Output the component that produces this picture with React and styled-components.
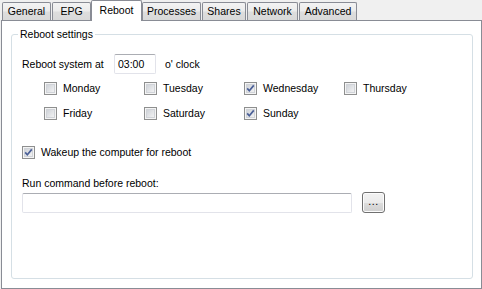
import React from "react";
import styled, { createGlobalStyle } from "styled-components";

const GlobalStyle = createGlobalStyle`
    html, body {
        margin: 0;
        padding: 0;
        background: #f0f0f0;
    }
    body {
        font-family: "Liberation Sans", Arial, sans-serif;
        font-size: 10.5px;
        color: #000;
    }
`;

const Window = styled.div`
    width: 482px;
    height: 289px;
    background: #f0f0f0;
    overflow: hidden;
`;

const TabStrip = styled.div`
    display: flex;
    align-items: flex-end;
    height: 20px;
    padding-left: 2px;
`;

const Tab = styled.div`
    box-sizing: border-box;
    width: ${props => props.$w}px;
    margin-right: ${props => props.$gap}px;
    height: ${props => (props.$active ? 21 : 18)}px;
    margin-bottom: ${props => (props.$active ? -1 : 0)}px;
    border: 1px solid #898c95;
    border-bottom: ${props => (props.$active ? "none" : "0")};
    border-radius: 2px 2px 0 0;
    background: ${props =>
        props.$active
            ? "#fff"
            : "linear-gradient(#f3f3f3 0%, #ececec 45%, #dddddd 55%, #d9d9d9 100%)"};
    position: relative;
    z-index: ${props => (props.$active ? 2 : 1)};
    display: flex;
    justify-content: center;
    padding-top: ${props => (props.$active ? 3 : 2)}px;
    line-height: 13px;
    white-space: nowrap;
`;

const Panel = styled.div`
    box-sizing: border-box;
    margin-left: 1px;
    width: 481px;
    height: 269px;
    border: 1px solid #898c95;
    background: #fff;
    position: relative;
    z-index: 1;
    padding-top: 7px;
`;

const GroupBox = styled.fieldset`
    box-sizing: border-box;
    margin: 0 0 0 9px;
    width: 462px;
    height: 251px;
    padding: 0;
    border: 1px solid #d5dfe5;
    border-radius: 3px;
`;

const Legend = styled.legend`
    margin-left: 6px;
    padding: 0 2px;
    line-height: 13px;
`;

const Body = styled.div`
    padding: 13px 0 0 10px;
    display: flex;
    flex-direction: column;
`;

const TimeRow = styled.div`
    display: flex;
    align-items: center;
    height: 20px;
`;

const RowLabel = styled.span`
    width: 92px;
`;

const TextBox = styled.div`
    box-sizing: border-box;
    width: ${props => props.$w}px;
    height: 20px;
    border: 1px solid #e2e3ea;
    border-top-color: #abadb3;
    border-radius: 2px;
    background: #fff;
    padding: 2px 0 0 3px;
    line-height: 14px;
`;

const Suffix = styled.span`
    margin-left: 9px;
`;

const DayGrid = styled.div`
    display: grid;
    grid-template-columns: repeat(4, 100px);
    grid-auto-rows: 25px;
    margin: 8px 0 0 22px;
`;

const CheckRow = styled.label`
    display: flex;
    align-items: center;
    height: 13px;
    gap: 6px;
    line-height: 13px;
`;

const WakeRow = styled(CheckRow)`
    margin-top: 14px;
`;

const CommandLabel = styled.div`
    margin-top: 18px;
    line-height: 13px;
`;

const CommandRow = styled.div`
    display: flex;
    align-items: flex-start;
    margin-top: 3px;
`;

const BrowseButton = styled.div`
    box-sizing: border-box;
    width: 23px;
    height: 21px;
    margin: -1px 0 0 10px;
    border: 1px solid #707070;
    border-radius: 3px;
    background: linear-gradient(#f2f2f2 0%, #ebebeb 50%, #dddddd 51%, #cfcfcf 100%);
    box-shadow: inset 0 0 0 1px #fcfcfc;
    display: flex;
    justify-content: center;
    line-height: 16px;
    letter-spacing: 0.5px;
`;

const CheckBox = ({ checked }) => (
    <svg width="13" height="13" viewBox="0 0 13 13">
        <defs>
            <linearGradient id="cbfill" x1="0" y1="0" x2="1" y2="1">
                <stop offset="0" stopColor="#cbcfd5" />
                <stop offset="1" stopColor="#f6f6f6" />
            </linearGradient>
        </defs>
        <rect x="0.5" y="0.5" width="12" height="12" fill="#f4f4f4" stroke="#8e8f8f" />
        <rect x="2" y="2" width="9" height="9" fill="url(#cbfill)" />
        <rect x="2.5" y="2.5" width="8" height="8" fill="none" stroke="#d0d3d8" />
        {checked && (
            <path d="M3.2 6.4 L5.3 8.8 L9.8 3.4" fill="none" stroke="#4a5f97" strokeWidth="1.7" />
        )}
    </svg>
);

const tabs = [
    { label: "General", w: 49, gap: 1 },
    { label: "EPG", w: 39, gap: 0 },
    { label: "Reboot", w: 51, gap: 0, active: true },
    { label: "Processes", w: 59, gap: 1 },
    { label: "Shares", w: 44, gap: 1 },
    { label: "Network", w: 51, gap: 1 },
    { label: "Advanced", w: 58, gap: 0 },
];

const days = [
    { name: "Monday", on: false },
    { name: "Tuesday", on: false },
    { name: "Wednesday", on: true },
    { name: "Thursday", on: false },
    { name: "Friday", on: false },
    { name: "Saturday", on: false },
    { name: "Sunday", on: true },
];

const App = () => (
    <>
        <GlobalStyle />
        <Window>
            <TabStrip>
                {tabs.map(t => (
                    <Tab key={t.label} $w={t.w} $gap={t.gap} $active={t.active}>
                        {t.label}
                    </Tab>
                ))}
            </TabStrip>
            <Panel>
                <GroupBox>
                    <Legend>Reboot settings</Legend>
                    <Body>
                        <TimeRow>
                            <RowLabel>Reboot system at</RowLabel>
                            <TextBox $w={42}>03:00</TextBox>
                            <Suffix>o' clock</Suffix>
                        </TimeRow>
                        <DayGrid>
                            {days.map(d => (
                                <CheckRow key={d.name}>
                                    <CheckBox checked={d.on} />
                                    {d.name}
                                </CheckRow>
                            ))}
                        </DayGrid>
                        <WakeRow>
                            <CheckBox checked />
                            Wakeup the computer for reboot
                        </WakeRow>
                        <CommandLabel>Run command before reboot:</CommandLabel>
                        <CommandRow>
                            <TextBox $w={330} />
                            <BrowseButton>...</BrowseButton>
                        </CommandRow>
                    </Body>
                </GroupBox>
            </Panel>
        </Window>
    </>
);

export default App;
